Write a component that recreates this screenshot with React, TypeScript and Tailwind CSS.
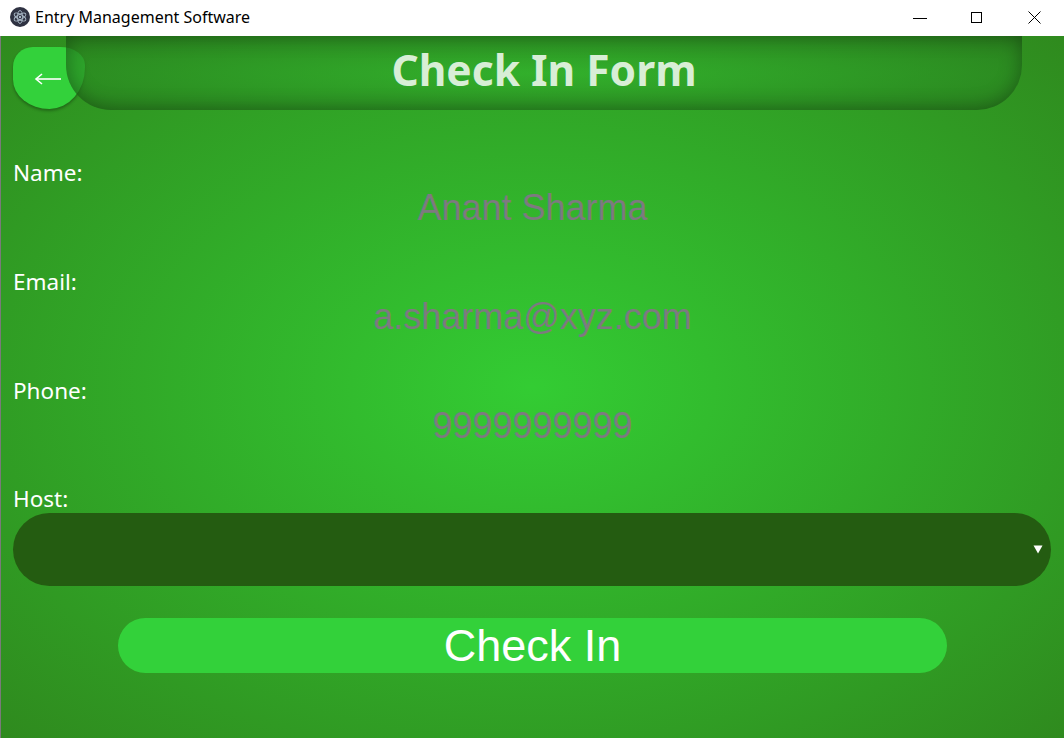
import React from "react";

function ElectronIcon() {
  return (
    <svg width="20" height="20" viewBox="0 0 20 20">
      <circle cx="10" cy="10" r="10" fill="#2f3242" />
      <g fill="none" stroke="#a9b8c6" strokeWidth="0.9">
        <ellipse cx="10" cy="10" rx="6.5" ry="2.6" transform="rotate(30 10 10)" />
        <ellipse cx="10" cy="10" rx="6.5" ry="2.6" transform="rotate(90 10 10)" />
        <ellipse cx="10" cy="10" rx="6.5" ry="2.6" transform="rotate(150 10 10)" />
      </g>
      <circle cx="10" cy="10" r="1.2" fill="#a9b8c6" />
    </svg>
  );
}

function TitleBar() {
  return (
    <div className="h-[36px] bg-white flex items-center shrink-0">
      <div className="ml-[10px] mt-[-2px]">
        <ElectronIcon />
      </div>
      <div className="ml-[5px] mt-[-2px] text-[16px] text-black font-['Noto_Sans',sans-serif]">
        Entry Management Software
      </div>
      <div className="ml-auto flex h-full">
        <div className="w-[58px] flex items-center justify-center">
          <svg width="16" height="16" viewBox="0 0 16 16">
            <line x1="2" y1="8.5" x2="16" y2="8.5" stroke="#000" strokeWidth="1" />
          </svg>
        </div>
        <div className="w-[58px] flex items-center justify-center">
          <svg width="16" height="16" viewBox="0 0 16 16">
            <rect x="2.5" y="2.5" width="10" height="10" fill="none" stroke="#000" strokeWidth="1" />
          </svg>
        </div>
        <div className="w-[58px] flex items-center justify-center">
          <svg width="16" height="16" viewBox="0 0 16 16">
            <line x1="1.5" y1="1.5" x2="13.5" y2="13.5" stroke="#000" strokeWidth="1" />
            <line x1="13.5" y1="1.5" x2="1.5" y2="13.5" stroke="#000" strokeWidth="1" />
          </svg>
        </div>
      </div>
    </div>
  );
}

function Field({ label, value }: { label: string; value: string }) {
  return (
    <div className="flex flex-col h-[109px]">
      <div className="h-[30px] leading-[30px] text-[22.5px] text-white font-['Noto_Sans',sans-serif]">
        {label}
      </div>
      <div className="h-[40px] leading-[40px] text-center text-[36px] text-[#7d7a80] font-['Liberation_Sans',Arial,sans-serif]">
        {value}
      </div>
    </div>
  );
}

export default function App() {
  return (
    <div className="w-[1064px] h-[738px] flex flex-col overflow-hidden bg-white">
      <TitleBar />
      <div className="flex-1 relative border-l border-[#7a7a7a] bg-[radial-gradient(ellipse_at_50%_50%,#33cc33_0%,#2f8a1e_100%)]">
        <div className="relative h-[74px]">
          <button className="absolute left-[12px] top-[11px] w-[72px] h-[62px] bg-[#33d13b] rounded-[20px_25px_36px_37px/20px_18px_42px_30px] shadow-[0_2px_3px_rgba(0,0,0,0.3)] flex items-center justify-center">
            <svg width="28" height="12" viewBox="0 0 28 12" className="mr-[2px] mt-[2px]">
              <line x1="2" y1="6" x2="27" y2="6" stroke="#fff" strokeWidth="1.6" />
              <polyline points="8,1 2,6 8,11" fill="none" stroke="#fff" strokeWidth="1.6" />
            </svg>
          </button>
          <div className="relative ml-[65px] w-[956px] h-[74px] rounded-b-[45px] bg-[radial-gradient(ellipse_at_50%_50%,rgba(51,185,47,0.6)_0%,rgba(38,118,28,0.65)_100%)] shadow-[inset_0_0_20px_rgba(0,0,0,0.35)] flex items-center justify-center">
            <div className="mt-[-6px] text-[42.5px] font-bold text-[#d8eed6] font-['Noto_Sans',sans-serif]">
              Check In Form
            </div>
          </div>
        </div>
        <div className="px-[12px] pt-[48px]">
          <Field label="Name:" value="Anant Sharma" />
          <Field label="Email:" value="a.sharma@xyz.com" />
          <Field label="Phone:" value="9999999999" />
          <div className="h-[28px] leading-[28px] text-[22.5px] text-white font-['Noto_Sans',sans-serif]">
            Host:
          </div>
          <div className="h-[73px] mr-[1px] rounded-full bg-[#245c11] flex items-center justify-end pr-[8px]">
            <svg width="10" height="9" viewBox="0 0 10 9">
              <polygon points="0.5,0.5 9.5,0.5 5,8.5" fill="#fff" />
            </svg>
          </div>
          <div className="flex justify-center mt-[32px]">
            <button className="w-[829px] h-[55px] rounded-full bg-[#33d13a] text-white text-[45px] leading-[55px] font-['Liberation_Sans',Arial,sans-serif]">
              Check In
            </button>
          </div>
        </div>
      </div>
    </div>
  );
}
